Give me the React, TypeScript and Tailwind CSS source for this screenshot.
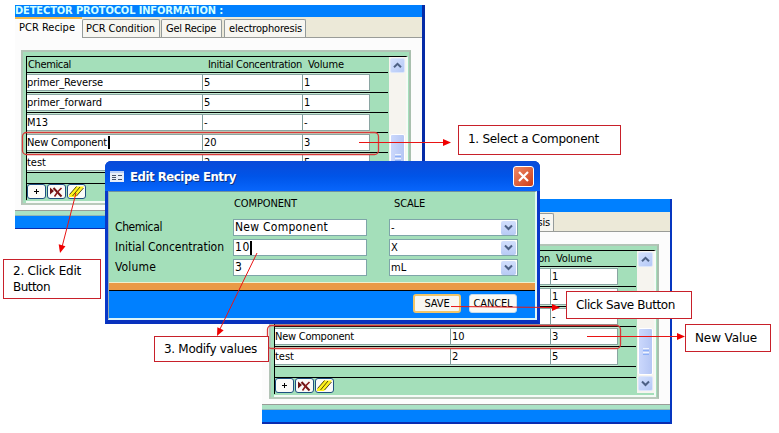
import { useLayoutEffect, useRef, type ReactNode } from 'react';

/** Single line of text whose letter spacing is adjusted to span `w` pixels. */
function Fit({ w, children, className = '' }: { w: number; children: string; className?: string }) {
  const ref = useRef<HTMLSpanElement>(null);
  useLayoutEffect(() => {
    const el = ref.current;
    if (!el) return;
    el.style.letterSpacing = '0px';
    const natural = el.getBoundingClientRect().width;
    el.style.letterSpacing = `${(w - natural) / children.length}px`;
  }, [w, children]);
  return (
    <span ref={ref} className={`inline-block whitespace-pre ${className}`}>
      {children}
    </span>
  );
}

function Chevron({ up = false }: { up?: boolean }) {
  return (
    <svg width="9" height="7" viewBox="0 0 9 7" fill="none" stroke="#4d6185" strokeWidth="2">
      <path d={up ? 'M1 5.2 4.5 1.8 8 5.2' : 'M1 1.5 4.5 5 8 1.5'} />
    </svg>
  );
}

function ScrollButton({ up = false }: { up?: boolean }) {
  return (
    <div className="flex h-[15px] w-[15px] shrink-0 items-center justify-center rounded-[2px] border border-[#dce6fb] bg-linear-to-br from-[#d5e1fd] to-[#b4c8f6]">
      <Chevron up={up} />
    </div>
  );
}

function Scrollbar() {
  return (
    <div className="flex h-[142px] w-[17px] flex-col items-start bg-[#f6f4ef] pt-px pl-px">
      <ScrollButton up />
      <div className="mt-[61px] flex h-[47px] w-[15px] shrink-0 flex-col items-center justify-center gap-px rounded-[2px] border border-white bg-linear-to-r from-[#cbd8fc] to-[#b5c6f4]">
        <i className="h-px w-[6px] bg-[#eef4fe]" />
        <i className="h-px w-[6px] bg-[#8cb0f8]" />
        <i className="h-px w-[6px] bg-[#eef4fe]" />
        <i className="h-px w-[6px] bg-[#8cb0f8]" />
      </div>
      <div className="mt-px">
        <ScrollButton />
      </div>
    </div>
  );
}

function ToolButton({ children }: { children: ReactNode }) {
  return (
    <div className="flex h-[15px] w-[19px] items-center justify-center overflow-hidden rounded-[3px] border border-[#1d4f80] bg-[#fbfbf8]">
      {children}
    </div>
  );
}

function Toolbar() {
  return (
    <div className="flex gap-px">
      <ToolButton>
        <svg width="7" height="7" stroke="#000">
          <path d="M3.5 1v5M1 3.5h5" />
        </svg>
      </ToolButton>
      <ToolButton>
        <svg width="15" height="12" fill="none">
          <path d="M1 1.5v7L5 5z" fill="#701414" />
          <path d="M4.500 2 12.500 10.500" stroke="#701414" strokeWidth="2" />
          <path d="M12.500 2 9 5.500 5.500 10.500" stroke="#8a1c1c" strokeWidth="1.600" />
        </svg>
      </ToolButton>
      <ToolButton>
        <svg width="17" height="13">
          <path d="M1 10.500 8 1.500H16L8 12H1z" fill="#fff21c" />
          <path d="M1.500 9.500 8.500 1.500M4.500 11 12 2M8.500 11 15.500 3" stroke="#3c3800" strokeWidth="0.900" />
        </svg>
      </ToolButton>
    </div>
  );
}

type Row = { name: string; w: number; conc: string; vol: string; caret?: boolean };

function Cell({ className, children }: { className: string; children: ReactNode }) {
  return (
    <div className={`flex h-[17px] items-center border-y border-l border-y-[#8aa5a2] border-l-[#7d9c9c] bg-white ${className}`}>
      {children}
    </div>
  );
}

function ProtocolWindow({ rows, second = false }: { rows: Row[]; second?: boolean }) {
  return (
    <div className={`flex h-full flex-col border-b-[#0a2cb0] bg-[#fcfcfc] ${second ? 'border-b-2' : 'border-b'}`}>
      <div className={`flex shrink-0 items-center bg-[#0080ff] ${second ? 'h-[13px]' : 'h-[12px]'}`}>
        <Fit w={208} className="text-[11px] leading-[12px] font-bold text-[#d2ffff]">DETECTOR PROTOCOL INFORMATION :</Fit>
      </div>
      <div className={`flex shrink-0 items-end border-b border-[#9a9c98] bg-[#ece9d8] ${second ? 'h-[20px] pl-px' : 'h-[21px]'}`}>
        <div className="-mb-px flex h-[21px] w-[67px] items-center border-t-2 border-[#f0b848] bg-[#fcfcfc] pb-[2px] pl-[4px]">
          <Fit w={56}>PCR Recipe</Fit>
        </div>
        <div className="flex h-[18px] w-[78px] items-center rounded-t-[2px] border-x border-t border-[#949b9b] bg-[#f7f6f1] pl-[3px]">
          <Fit w={69}>PCR Condition</Fit>
        </div>
        <div className="ml-px flex h-[18px] w-[61px] items-center rounded-t-[2px] border-x border-t border-[#949b9b] bg-[#f7f6f1] pl-[4px]">
          <Fit w={50}>Gel Recipe</Fit>
        </div>
        <div className="ml-[2px] flex h-[18px] w-[82px] items-center rounded-t-[2px] border-x border-t border-[#949b9b] bg-[#f7f6f1] pl-[4px]">
          <Fit w={73}>electrophoresis</Fit>
        </div>
      </div>
      <div className={`mt-[12px] h-[155px] w-[390px] shrink-0 border-2 border-t-[#b3c4b7] border-r-[#a9bfae] border-b-[#b9c9bb] border-l-[#b3c4b7] bg-[#a4dfba] pt-[4px] pl-[3px] ${second ? 'ml-[7px]' : 'ml-[6px]'}`}>
        <div className="flex h-[147px] w-[382px] border-t border-r-2 border-b-2 border-t-black border-r-[#f4fbf6] border-b-[#f4fbf6]">
          <div className="h-[143px] w-[362px] border-l border-black">
            <div className="flex h-[16px] items-center border-b border-black pl-px">
              <Fit w={43}>Chemical</Fit>
              <Fit w={94} className="ml-[137px]">Initial Concentration</Fit>
              <Fit w={36} className="ml-[6px]">Volume</Fit>
            </div>
            {rows.map((r) => (
              <div key={r.name} className="flex h-[20px] border-b border-black bg-[#c2e9d1] pt-px">
                <Cell className="w-[175px] border-l-0!">
                  <Fit w={r.w}>{r.name}</Fit>
                  {r.caret && <i className="ml-px h-[13px] w-[2px] bg-black" />}
                </Cell>
                <Cell className="w-[100px] pl-px">{r.conc}</Cell>
                <Cell className="w-[68px] border-r border-r-[#8aa5a2] pl-px">{r.vol}</Cell>
                <div className="-mt-px flex-1 bg-[#a4dfba]" />
              </div>
            ))}
            <div className="h-[11px] border-b border-black" />
            <Toolbar />
          </div>
          <div className="pl-px">
            <Scrollbar />
          </div>
        </div>
      </div>
      <div className="mt-[5px] h-[6px] shrink-0 border-y border-t-[#999c98] border-b-[#93b5b5] bg-[#a9e2c5]" />
      <div className="flex-1 bg-[#0080ff]" />
    </div>
  );
}

function Field({ label, w, value, vw, caret, scale }: { label: string; w: number; value: string; vw: number; caret?: boolean; scale: string }) {
  return (
    <div className="flex h-[17px] items-center text-[12px]">
      <div className="w-[118px]">
        <Fit w={w}>{label}</Fit>
      </div>
      <div className="flex h-[17px] w-[134px] items-center border border-[#7fa5a9] bg-white pl-px">
        <Fit w={vw}>{value}</Fit>
        {caret && <i className="h-[14px] w-[2px] bg-black" />}
      </div>
      <div className="ml-[22px] flex h-[17px] w-[129px] items-center justify-between border border-[#7fa5a9] bg-white pr-px pl-px text-[11px]">
        <span>{scale}</span>
        <div className="flex h-[14px] w-[15px] items-center justify-center rounded-[2px] bg-linear-to-b from-[#d2dffc] to-[#b8cbf5]">
          <Chevron />
        </div>
      </div>
    </div>
  );
}

function EditDialog() {
  return (
    <div className="flex h-full flex-col rounded-t-[6px] border-x-[3px] border-b-4 border-x-[#0838c8] border-b-[#0831bd] bg-[#0058e8]">
      <div className="-mx-[3px] flex h-[30px] shrink-0 items-center rounded-t-[6px] bg-linear-to-b from-[#0a4ad8] via-[#0054e8] via-50% to-[#0866fc] pr-[6px] pl-[5px]">
        <svg width="14" height="11">
          <path d="M0 0h14v11H0z" fill="#e8edf8" />
          <path d="M0 0h14v2H0z" fill="#b9cdf5" />
          <path d="M2 4.500h4M2 6.500h4M2 8.500h4M8 4.500h4M8 8.500h4" stroke="#47536b" />
        </svg>
        <Fit w={106} className="mt-[2px] ml-[6px] text-[13px] leading-[16px] font-bold text-white [text-shadow:1px_1px_0_#0a3080]">Edit Recipe Entry</Fit>
        <div className="ml-auto flex h-[21px] w-[21px] items-center justify-center rounded-[3px] border border-white bg-linear-to-br from-[#ee8864] to-[#cc3a12]">
          <svg width="13" height="13" stroke="#fff" strokeWidth="2.200">
            <path d="M2 2 11 11M11 2 2 11" />
          </svg>
        </div>
      </div>
      <div className="flex flex-1 flex-col border-t border-r-2 border-b-2 border-l border-t-[#70949d] border-r-[#e2f7f4] border-b-[#d9f3fa] border-l-[#94acb8] bg-[#a4dfba]">
        <div className="flex h-[90px] flex-col pl-[6px]">
          <div className="flex h-[27px] items-center pb-[4px] pl-[119px]">
            <Fit w={63}>COMPONENT</Fit>
            <Fit w={31} className="ml-[97px]">SCALE</Fit>
          </div>
          <div className="flex flex-col gap-[3px]">
            <Field label="Chemical" w={47} value="New Component" vw={93} scale="-" />
            <Field label="Initial Concentration" w={109} value="10" vw={15} caret scale="X" />
            <Field label="Volume" w={41} value="3" vw={7} scale="mL" />
          </div>
        </div>
        <div className="h-[9px] border-t border-b border-t-[#eef0cc] border-b-black bg-[#e99a45]" />
        <div className="flex flex-1 justify-end gap-[8px] bg-[#0080ff] pt-[3px] pr-[18px]">
          <div className="flex h-[19px] w-[48px] items-center justify-center rounded-[3px] border-2 border-[#f1c567] bg-[#f8f7f2]">
            <Fit w={25}>SAVE</Fit>
          </div>
          <div className="flex h-[19px] w-[48px] items-center justify-center rounded-[3px] border border-[#c7dcea] bg-[#fafaf6]">
            <Fit w={39}>CANCEL</Fit>
          </div>
        </div>
      </div>
    </div>
  );
}

function Callout({ className, children }: { className: string; children: ReactNode }) {
  return (
    <div className={`absolute flex flex-col items-start justify-center border border-[#c8202a] bg-white pl-[9px] font-['DejaVu_Sans',sans-serif] text-[12px] leading-[16px] ${className}`}>
      {children}
    </div>
  );
}

function Head({ x, y, angle }: { x: number; y: number; angle: number }) {
  return <path d="M0 0-8-3.500V3.500z" fill="#f00000" transform={`translate(${x} ${y}) rotate(${angle})`} />;
}

export default function App() {
  return (
    <div className="relative h-[433px] w-[779px] overflow-hidden bg-white font-['DejaVu_Sans_Condensed','DejaVu_Sans',sans-serif] text-[11px] leading-[13px] text-black">
      <div className="absolute top-[5px] left-[15px] h-[224px] w-[410px] border-r-[3px] border-[#062ba6]">
        <ProtocolWindow
          rows={[
            { name: 'primer_Reverse', w: 76, conc: '5', vol: '1' },
            { name: 'primer_forward', w: 75, conc: '5', vol: '1' },
            { name: 'M13', w: 21, conc: '-', vol: '-' },
            { name: 'New Component', w: 80, conc: '20', vol: '3', caret: true },
            { name: 'test', w: 19, conc: '2', vol: '5' },
          ]}
        />
      </div>
      <div className="absolute top-[199px] left-[262px] h-[225px] w-[410px] border-r-2 border-[#0636c0]">
        <ProtocolWindow
          second
          rows={[
            { name: 'primer_Reverse', w: 76, conc: '5', vol: '1' },
            { name: 'primer_forward', w: 75, conc: '5', vol: '1' },
            { name: 'M13', w: 21, conc: '-', vol: '-' },
            { name: 'New Component', w: 79, conc: '10', vol: '3' },
            { name: 'test', w: 19, conc: '2', vol: '5' },
          ]}
        />
      </div>
      <svg className="absolute inset-0" width="779" height="433" fill="none" stroke="#d83a3a" strokeWidth="1.300">
        <rect x="22.500" y="132.500" width="356" height="22" rx="4" />
        <rect x="267.500" y="325.500" width="353" height="23" rx="4" />
      </svg>
      <div className="absolute top-[161px] left-[105px] h-[163px] w-[435px]">
        <EditDialog />
      </div>

      <Callout className="top-[125px] left-[458px] h-[30px] w-[163px] pb-[3px]">
        <Fit w={131}>1. Select a Component</Fit>
      </Callout>
      <Callout className="top-[259px] left-[3px] h-[40px] w-[98px]">
        <Fit w={68}>2. Click Edit</Fit>
        <Fit w={37}>Button</Fit>
      </Callout>
      <Callout className="top-[336px] left-[154px] h-[26px] w-[115px]">
        <Fit w={93}>3. Modify values</Fit>
      </Callout>
      <Callout className="top-[291px] left-[566px] h-[28px] w-[126px] pb-px">
        <Fit w={99}>Click Save Button</Fit>
      </Callout>
      <Callout className="top-[324px] left-[685px] h-[28px] w-[86px]">
        <Fit w={62}>New Value</Fit>
      </Callout>

      <svg className="absolute inset-0" width="779" height="433" fill="none" stroke="#e81414">
        <path d="M359 142.500H445M76 193 62 247M257 253 220 329M451 306.500 553 307.500M587 336.500H679" />
        <g stroke="none">
          <Head x={451} y={142.5} angle={0} />
          <Head x={60} y={253} angle={105} />
          <Head x={217} y={336} angle={116} />
          <Head x={560} y={307.5} angle={0} />
          <Head x={685} y={336.5} angle={0} />
        </g>
      </svg>
    </div>
  );
}
